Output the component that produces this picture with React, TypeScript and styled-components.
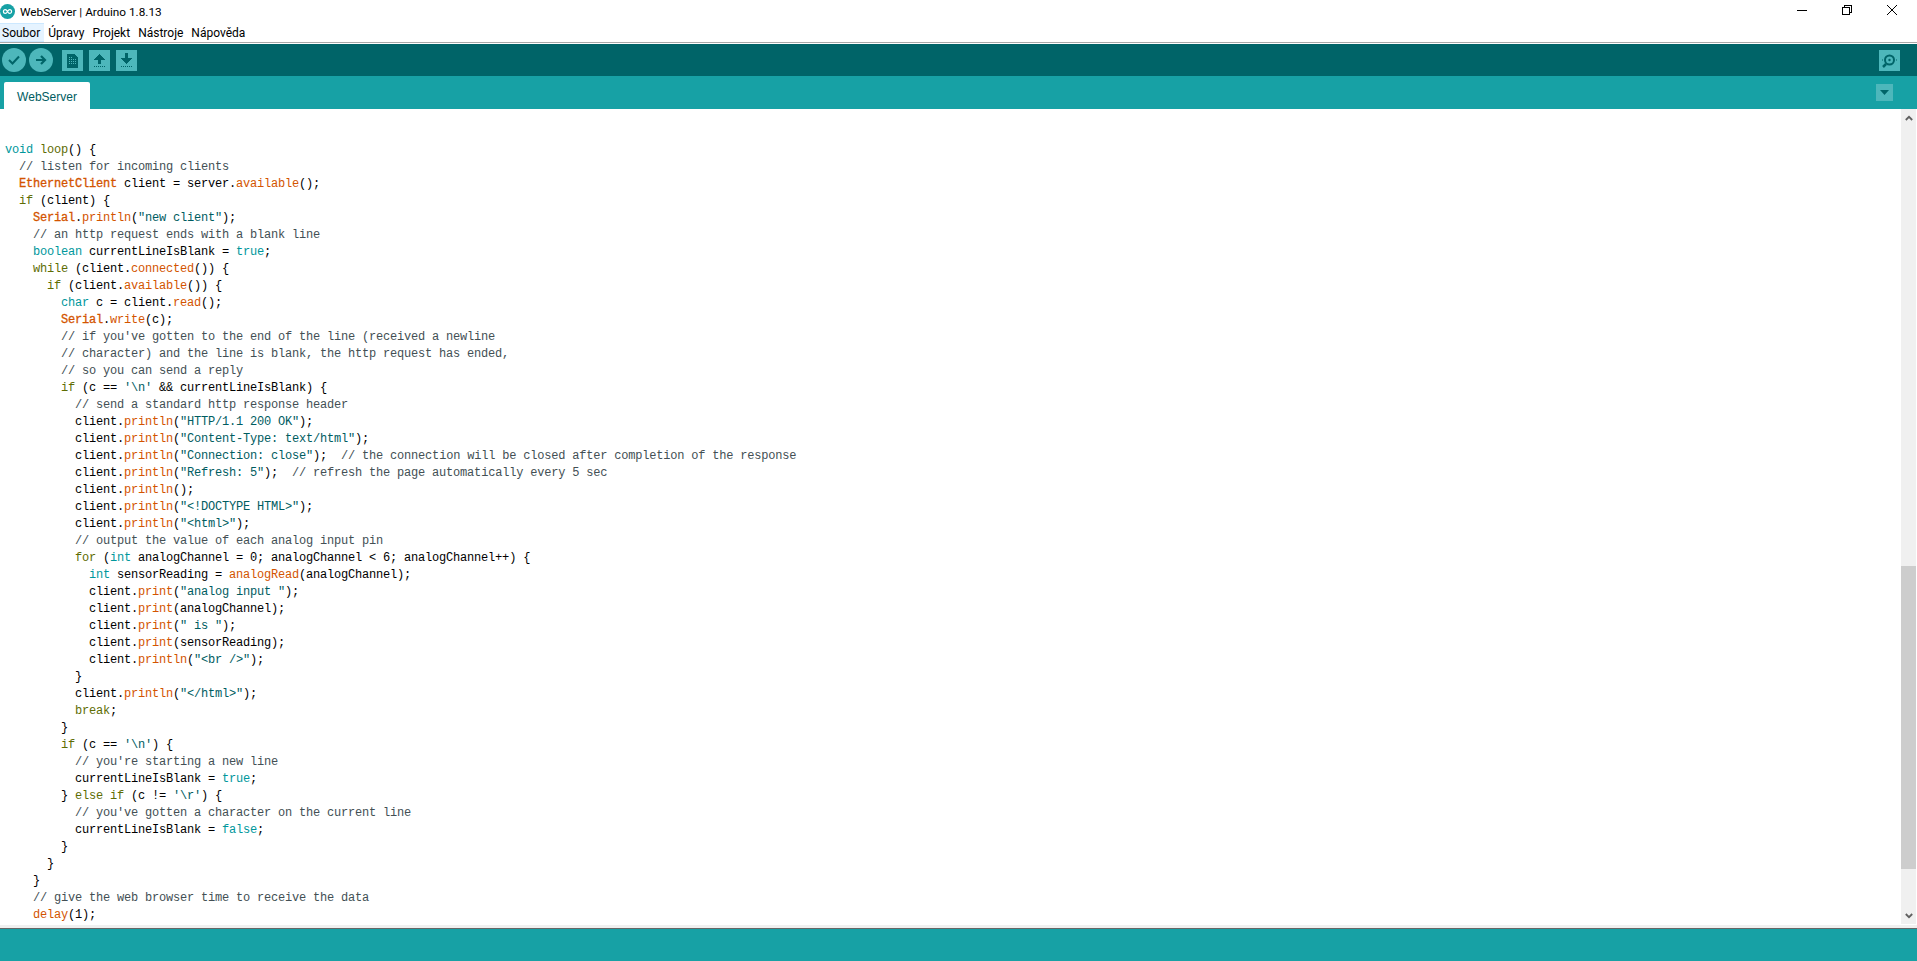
import styled, { createGlobalStyle } from 'styled-components';

type Kind = 'plain' | 'comment' | 'type' | 'control' | 'func' | 'cls' | 'str';

const code = `void loop() {
  // listen for incoming clients
  EthernetClient client = server.available();
  if (client) {
    Serial.println("new client");
    // an http request ends with a blank line
    boolean currentLineIsBlank = true;
    while (client.connected()) {
      if (client.available()) {
        char c = client.read();
        Serial.write(c);
        // if you've gotten to the end of the line (received a newline
        // character) and the line is blank, the http request has ended,
        // so you can send a reply
        if (c == '\\n' && currentLineIsBlank) {
          // send a standard http response header
          client.println("HTTP/1.1 200 OK");
          client.println("Content-Type: text/html");
          client.println("Connection: close");  // the connection will be closed after completion of the response
          client.println("Refresh: 5");  // refresh the page automatically every 5 sec
          client.println();
          client.println("<!DOCTYPE HTML>");
          client.println("<html>");
          // output the value of each analog input pin
          for (int analogChannel = 0; analogChannel < 6; analogChannel++) {
            int sensorReading = analogRead(analogChannel);
            client.print("analog input ");
            client.print(analogChannel);
            client.print(" is ");
            client.print(sensorReading);
            client.println("<br />");
          }
          client.println("</html>");
          break;
        }
        if (c == '\\n') {
          // you're starting a new line
          currentLineIsBlank = true;
        } else if (c != '\\r') {
          // you've gotten a character on the current line
          currentLineIsBlank = false;
        }
      }
    }
    // give the web browser time to receive the data
    delay(1);`.split('\n');

const tokenPattern =
  /(\/\/.*$)|("[^"]*"|'[^']*')|\b(void|boolean|char|int|true|false)\b|\b(loop|if|else|while|for|break)\b|\b(EthernetClient|Serial)\b|\b(available|println|print|connected|read|write|analogRead|delay)\b/g;

const kinds: Kind[] = ['comment', 'str', 'type', 'control', 'cls', 'func'];

const tokenize = (line: string) => {
  const out: { text: string; kind: Kind }[] = [];
  let last = 0;
  for (const m of line.matchAll(tokenPattern)) {
    const at = m.index ?? 0;
    if (at > last) out.push({ text: line.slice(last, at), kind: 'plain' });
    const group = m.slice(1).findIndex(Boolean);
    out.push({ text: m[0], kind: kinds[group] });
    last = at + m[0].length;
  }
  if (last < line.length) out.push({ text: line.slice(last), kind: 'plain' });
  return out;
};

const tokenColors: Record<Kind, string> = {
  plain: '#000000',
  comment: '#434f54',
  type: '#00979c',
  control: '#5e6d03',
  func: '#d35400',
  cls: '#d35400',
  str: '#005c5f',
};

const GlobalStyle = createGlobalStyle`
  html, body {
    margin: 0;
    padding: 0;
    height: 100%;
    overflow: hidden;
    background: #ffffff;
  }
`;

const Window = styled.div`
  width: 1917px;
  height: 961px;
  display: flex;
  flex-direction: column;
  overflow: hidden;
  font-family: Roboto, "Liberation Sans", sans-serif;
  font-size: 12px;
  color: #000000;
`;

const TitleBar = styled.div`
  height: 23px;
  flex: none;
  display: flex;
  align-items: center;
  gap: 5px;
  padding-right: 3px;
`;

const TitleText = styled.span`
  flex: 1;
  line-height: 21px;
  padding-top: 1px;
  font-size: 11.8px;
`;

const WindowControls = styled.div`
  align-self: flex-start;
  display: flex;
  align-items: center;
  color: #000000;
`;

const WindowButton = styled.div`
  width: 45px;
  height: 20px;
  display: flex;
  align-items: center;
  justify-content: center;
`;

const MenuBar = styled.div`
  height: 19px;
  flex: none;
  display: flex;
  align-items: stretch;
  gap: 2px;
  border-bottom: 1px solid #a9a9a9;
  margin-bottom: 1px;
`;

const MenuItem = styled.div<{ $active?: boolean }>`
  padding: 1px 4px 0 2px;
  line-height: 16px;
  box-sizing: border-box;
  background: ${(p) => (p.$active ? '#e5f3ff' : 'transparent')};
  border-top: 1px solid ${(p) => (p.$active ? '#cce8ff' : 'transparent')};
  border-bottom: 1px solid ${(p) => (p.$active ? '#cce8ff' : 'transparent')};
`;

const Toolbar = styled.div`
  height: 32px;
  flex: none;
  background: #006468;
  display: flex;
  align-items: center;
  padding: 0 17px 0 2px;
`;

const RoundButton = styled.div`
  width: 24px;
  height: 24px;
  border-radius: 50%;
  background: #4db7bb;
  margin-right: 3px;
  display: flex;
  align-items: center;
  justify-content: center;
`;

const SquareButton = styled.div`
  width: 21px;
  height: 21px;
  background: #4db7bb;
  margin-left: 6px;
  display: flex;
  align-items: center;
  justify-content: center;
`;

const ToolbarSpacer = styled.div`
  flex: 1;
`;

const TabStrip = styled.div`
  height: 33px;
  flex: none;
  background: #17a1a5;
  display: flex;
  align-items: flex-end;
  justify-content: space-between;
  padding: 0 24px 0 4px;
`;

const Tab = styled.div`
  width: 86px;
  height: 27px;
  box-sizing: border-box;
  padding-top: 3px;
  background: #ffffff;
  border-radius: 2px 2px 0 0;
  display: flex;
  align-items: center;
  justify-content: center;
  font-family: "Liberation Sans", Arial, sans-serif;
  font-size: 12px;
  color: #005c5f;
`;

const TabMenu = styled.div`
  width: 17px;
  height: 17px;
  margin-bottom: 8px;
  background: #4db7bb;
  display: flex;
  align-items: center;
  justify-content: center;
`;

const EditorRow = styled.div`
  flex: 1;
  min-height: 0;
  display: flex;
`;

const Code = styled.pre`
  flex: 1;
  margin: 0;
  padding: 33px 0 0 5px;
  overflow: hidden;
  font-family: "Liberation Mono", "Courier New", monospace;
  font-size: 12px;
  letter-spacing: -0.2px;
  line-height: 17px;
  color: #000000;
`;

const Line = styled.div`
  height: 17px;
  white-space: pre;
`;

const Token = styled.span<{ $kind: Kind }>`
  color: ${(p) => tokenColors[p.$kind]};
  -webkit-text-stroke: ${(p) => (p.$kind === 'cls' ? '0.3px' : '0')};
`;

const ScrollBar = styled.div`
  width: 15px;
  margin: 0 1px 1px 0;
  flex: none;
  background: #f0f0f0;
  display: flex;
  flex-direction: column;
`;

const ScrollArrow = styled.div`
  height: 17px;
  flex: none;
  display: flex;
  align-items: center;
  justify-content: center;
`;

const ScrollTrack = styled.div<{ $grow: number }>`
  flex: ${(p) => p.$grow} 0 0;
`;

const ScrollThumb = styled.div`
  height: 303px;
  flex: none;
  background: #cdcdcd;
`;

const HorizontalEdge = styled.div`
  height: 3px;
  flex: none;
  background: #f0f0f0;
`;

const StatusBar = styled.div`
  height: 32px;
  flex: none;
  background: #17a1a5;
  border-top: 1px solid #666666;
`;

const Logo = () => (
  <svg width="15" height="15" viewBox="0 0 14 14">
    <circle cx="7" cy="7" r="7" fill="#17a1a5" />
    <path
      d="M5 5.2a1.8 1.8 0 1 0 0 3.6c1 0 1.4-.7 2-1.8.6-1.1 1-1.8 2-1.8a1.8 1.8 0 1 1 0 3.6c-1 0-1.4-.7-2-1.8-.6-1.1-1-1.8-2-1.8z"
      fill="none"
      stroke="#ffffff"
      strokeWidth="1.1"
    />
  </svg>
);

const ToolIcon = ({ d }: { d: string }) => (
  <svg width="21" height="21" viewBox="0 0 21 21" shapeRendering="crispEdges">
    <path d={d} fill="#006468" />
  </svg>
);

const dotted = 'M5 16h1v1H5zM7 16h1v1H7zM9 16h1v1H9zM11 16h1v1h-1zM13 16h1v1h-1zM15 16h1v1h-1z';

const App = () => (
  <Window>
    <GlobalStyle />
    <TitleBar>
      <Logo />
      <TitleText>WebServer | Arduino 1.8.13</TitleText>
      <WindowControls>
        <WindowButton>
          <svg width="10" height="10" viewBox="0 0 10 10"><path d="M0 5.5h10" stroke="#000" /></svg>
        </WindowButton>
        <WindowButton>
          <svg width="10" height="10" viewBox="0 0 10 10" fill="none" stroke="#000" shapeRendering="crispEdges">
            <path d="M.5 2.5h7v7h-7zM2.5 2.5v-2h7v7h-2" />
          </svg>
        </WindowButton>
        <WindowButton>
          <svg width="10" height="10" viewBox="0 0 10 10" stroke="#000"><path d="M0 0l10 10M10 0L0 10" /></svg>
        </WindowButton>
      </WindowControls>
    </TitleBar>
    <MenuBar>
      <MenuItem $active>Soubor</MenuItem>
      <MenuItem>Úpravy</MenuItem>
      <MenuItem>Projekt</MenuItem>
      <MenuItem>Nástroje</MenuItem>
      <MenuItem>Nápověda</MenuItem>
    </MenuBar>
    <Toolbar>
      <RoundButton>
        <svg width="14" height="12" viewBox="0 0 14 12">
          <path d="M2 6l3.5 3.5L12 2.5" fill="none" stroke="#006468" strokeWidth="2" />
        </svg>
      </RoundButton>
      <RoundButton>
        <svg width="14" height="12" viewBox="0 0 14 12">
          <path d="M2 6h8M7 2l4 4-4 4" fill="none" stroke="#006468" strokeWidth="2.2" />
        </svg>
      </RoundButton>
      <SquareButton>
        <ToolIcon d="M5 4h7l4 4v10H5zM7 7v1h1V7zM9 7v1h1V7zM7 9v1h1V9zM9 9v1h1V9zM11 9v1h1V9zM13 9v1h1V9zM7 11v1h1v-1zM9 11v1h1v-1zM11 11v1h1v-1zM13 11v1h1v-1zM7 13v1h1v-1zM9 13v1h1v-1zM11 13v1h1v-1zM13 13v1h1v-1z" />
      </SquareButton>
      <SquareButton>
        <ToolIcon d={`M10 4l6 6h-4v4H9v-4H5z${dotted}`} />
      </SquareButton>
      <SquareButton>
        <ToolIcon d={`M9 3h3v5h4l-5.500 6L5 8h4z${dotted}`} />
      </SquareButton>
      <ToolbarSpacer />
      <SquareButton>
        <svg width="21" height="21" viewBox="0 0 21 21">
          <circle cx="10.500" cy="10" r="4.500" fill="none" stroke="#006468" strokeWidth="2" />
          <circle cx="10.500" cy="10" r="1.200" fill="#006468" />
          <path d="M7 14l-3 3" stroke="#006468" strokeWidth="2.500" />
          <path d="M3 10h1M17 10h1" stroke="#006468" />
        </svg>
      </SquareButton>
    </Toolbar>
    <TabStrip>
      <Tab>WebServer</Tab>
      <TabMenu>
        <svg width="9" height="5" viewBox="0 0 9 5"><path d="M0 0h9L4.500 5z" fill="#006468" /></svg>
      </TabMenu>
    </TabStrip>
    <EditorRow>
      <Code>
        {code.map((line, i) => (
          <Line key={i}>
            {tokenize(line).map((t, j) => (
              <Token key={j} $kind={t.kind}>{t.text}</Token>
            ))}
          </Line>
        ))}
      </Code>
      <ScrollBar>
        <ScrollArrow>
          <svg width="8" height="6" viewBox="0 0 8 6"><path d="M.8 5L4 1.800 7.200 5" fill="none" stroke="#606060" strokeWidth="1.800" /></svg>
        </ScrollArrow>
        <ScrollTrack $grow={440} />
        <ScrollThumb />
        <ScrollTrack $grow={38} />
        <ScrollArrow>
          <svg width="8" height="6" viewBox="0 0 8 6"><path d="M.8 1L4 4.200 7.200 1" fill="none" stroke="#606060" strokeWidth="1.800" /></svg>
        </ScrollArrow>
      </ScrollBar>
    </EditorRow>
    <HorizontalEdge />
    <StatusBar />
  </Window>
);

export default App;
